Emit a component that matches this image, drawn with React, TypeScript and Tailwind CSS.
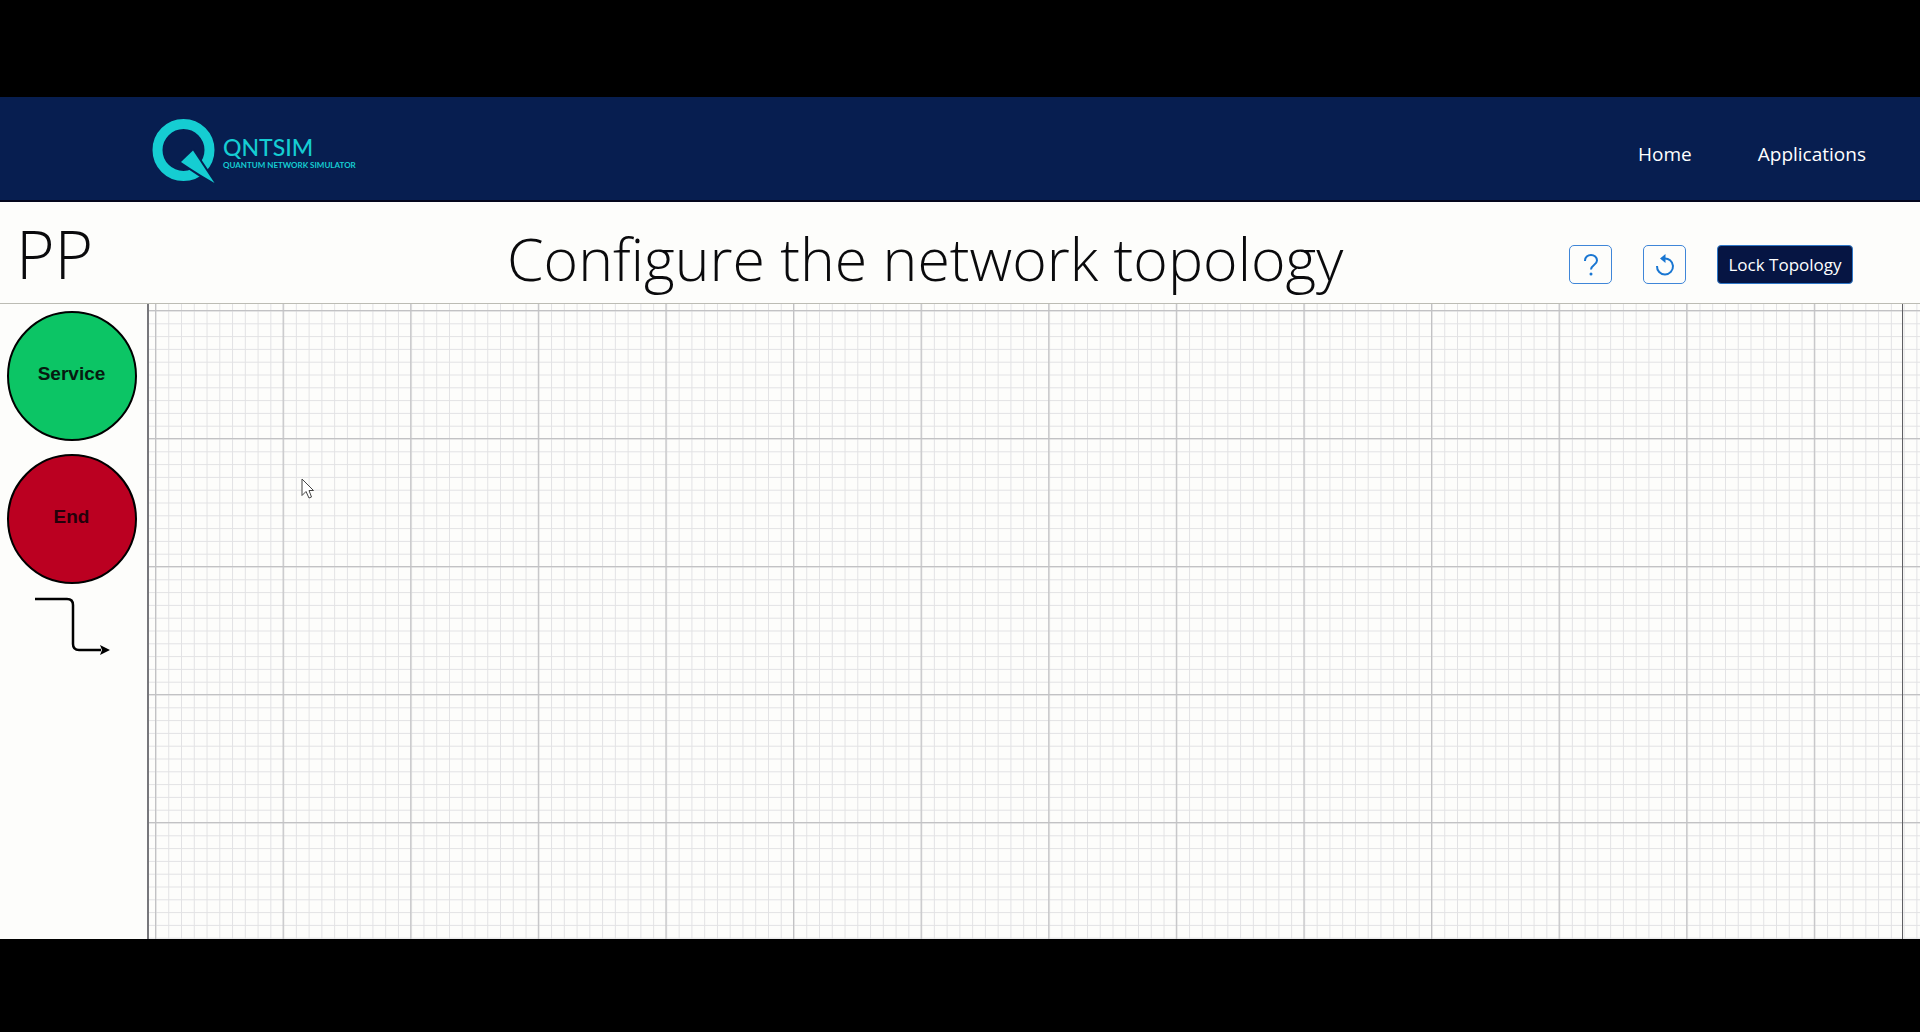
import React from "react";

const UI = "font-['Segoe_UI','Open_Sans',sans-serif]";

function Logo() {
  return (
    <a href="#" aria-label="QNTSIM Quantum Network Simulator" className="flex items-center gap-2 pt-1 text-[#15cdd2]">
      <svg width="63" height="66" viewBox="0 0 63 66" fill="none" aria-hidden="true">
        <circle cx="31.5" cy="32" r="26" stroke="currentColor" strokeWidth="10" />
        <path d="M27 45 L41 30 L49 41 L57 53 L66 66 L48 59Z" fill="#071e50" />
        <path d="M29 44 L41 32.500 L62.500 65 L49 57 L38 50Z" fill="currentColor" />
      </svg>
      <span className="flex flex-col font-['Lato',sans-serif]">
        <span className="text-[23px] leading-7 font-medium">QNTSIM</span>
        <span className="text-[8px] leading-none font-bold whitespace-nowrap">QUANTUM NETWORK SIMULATOR</span>
      </span>
    </a>
  );
}

function Header() {
  return (
    <header className="flex h-[105px] items-center justify-between border-b-2 border-[#03061c] bg-[#071e50] pr-[54px] pl-[152px]">
      <Logo />
      <nav className="flex gap-[66px] pt-3 text-[19px] text-white">
        <a href="#">Home</a>
        <a href="#">Applications</a>
      </nav>
    </header>
  );
}

function Toolbar() {
  return (
    <div className="flex h-[102px] items-center justify-between border-b border-[#bcbcb4] pr-[67px] pl-4">
      <h2 className="w-[491px] text-[66px] leading-none font-light">PP</h2>
      <h1 className="grow pt-3 text-[59px] leading-none font-light whitespace-nowrap">Configure the network topology</h1>
      <div className="flex gap-[31px] pt-6">
        <button aria-label="Help" className="flex h-[39px] w-[43px] items-center justify-center rounded-[5px] border border-[#3f86d8] text-[#1976d2]">
          <svg width="16" height="22" viewBox="0 0 16 22" fill="none" stroke="currentColor" strokeWidth="2" aria-hidden="true">
            <path d="M2 7V6.500a6 5.500 0 0 1 12 0c0 4.500-6 4.500-6 9" />
            <circle cx="8" cy="20" r="1.500" fill="currentColor" stroke="none" />
          </svg>
        </button>
        <button aria-label="Reset" className="flex h-[39px] w-[43px] items-center justify-center rounded-[5px] border border-[#3f86d8] text-[#1976d2]">
          <svg width="20" height="22" viewBox="0 0 20 22" fill="none" aria-hidden="true">
            <path d="M9 4.500A8 8 0 1 1 2 12" stroke="currentColor" strokeWidth="2" />
            <path d="M10.500 0v9L5 4.500Z" fill="currentColor" />
          </svg>
        </button>
        <button className="h-[39px] w-[136px] rounded-[4px] border border-[#2f78c8] bg-[#061543] text-[17px] leading-none whitespace-nowrap text-white">
          Lock Topology
        </button>
      </div>
    </div>
  );
}

function Palette() {
  return (
    <aside className="flex w-[149px] shrink-0 flex-col items-center gap-[13px] border-r-2 border-[#77777b] pt-[7px] pr-[4px] font-['Liberation_Sans',sans-serif] text-[19px] font-bold text-[#061a10]">
      <div className="flex size-[130px] items-center justify-center rounded-full border-2 border-black bg-[#0cc565] pb-1">Service</div>
      <div className="flex size-[130px] items-center justify-center rounded-full border-2 border-black bg-[#bb0021] pb-1 text-[#24000a]">End</div>
      <svg width="78" height="60" viewBox="0 0 78 60" fill="none" aria-hidden="true">
        <path d="M2 2H34Q40 2 40 8V47Q40 53 46 53H68" stroke="#000" strokeWidth="2.500" />
        <path d="M67 48L77 53L67 58L69 53Z" fill="#000" />
      </svg>
    </aside>
  );
}

function Canvas() {
  return (
    <section aria-label="Topology canvas" className="relative flex grow overflow-hidden">
      <svg className="absolute inset-0 size-full" aria-hidden="true">
        <defs>
          <pattern id="minor" x="6.500" y="6.500" width="12.760" height="12.800" patternUnits="userSpaceOnUse">
            <path d="M0 .5H13M.5 0V13" stroke="#e2e2e4" strokeWidth="1" />
          </pattern>
          <pattern id="major" x="6" y="6" width="127.600" height="128" patternUnits="userSpaceOnUse">
            <path d="M0 .5H128M.5 0V128" stroke="#c2c2c4" strokeWidth="1.500" />
          </pattern>
        </defs>
        <rect width="100%" height="100%" fill="url(#minor)" />
        <rect width="100%" height="100%" fill="url(#major)" />
      </svg>
      <div className="relative mr-[17px] grow border-r border-[#5f5f63]">
        <svg className="absolute top-[174px] left-[152px]" width="14" height="22" viewBox="0 0 14 22" aria-hidden="true">
          <path d="M1 1V17.500L5 13.500L8 20L10.500 19L8 12.500H12.500Z" fill="#fff" stroke="#444" strokeWidth="1" />
        </svg>
      </div>
    </section>
  );
}

export default function App() {
  return (
    <div className={`flex min-h-screen flex-col bg-black ${UI} text-[#0a0a0c]`}>
      <div className="h-[97px] shrink-0" />
      <Header />
      <main className="flex grow flex-col bg-[#fdfdfb]">
        <Toolbar />
        <div className="flex grow">
          <Palette />
          <Canvas />
        </div>
      </main>
      <div className="h-[93px] shrink-0" />
    </div>
  );
}
